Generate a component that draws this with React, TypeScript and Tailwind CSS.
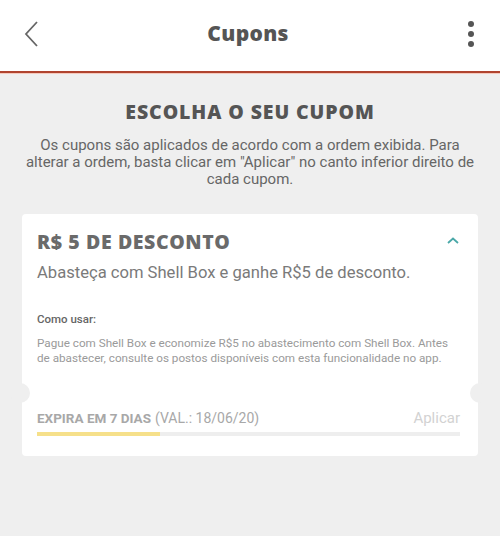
import React from "react";

const heading = { fontFamily: "'Open Sans', Lato, sans-serif" };

const CouponCard = () => {
  const progress = 29;

  return (
    <div className="relative mx-[22px] mt-[26px] rounded-[4px] bg-white px-[15px] pb-[20px] pt-[16px]">
      {/* ticket notches */}
      <div className="absolute left-[-12px] top-[169px] h-[20px] w-[20px] rounded-full bg-[#efefef]" />
      <div className="absolute right-[-12px] top-[169px] h-[20px] w-[20px] rounded-full bg-[#efefef]" />

      <div className="flex items-start justify-between">
        <h2
          className="text-[19.5px] font-extrabold leading-[24px] tracking-[0.6px] text-[#6a6a6a]"
          style={heading}
        >
          R$ 5 DE DESCONTO
        </h2>
        <svg width="14" height="10" viewBox="0 0 14 10" className="mr-[3px] mt-[6px]">
          <path d="M2 7 L7 2.5 L12 7" fill="none" stroke="#4aa8a8" strokeWidth="1.8" />
        </svg>
      </div>
      <p className="mt-[9px] text-[16.6px] leading-[20px] text-[#7a7a7a]">
        Abasteça com Shell Box e ganhe R$5 de desconto.
      </p>

      <p className="mt-[29px] text-[11.5px] font-medium leading-[14px] text-[#666]">
        Como usar:
      </p>
      <p className="mt-[10px] pr-[10px] text-[11.7px] leading-[15px] text-[#9a9a9a]">
        Pague com Shell Box e economize R$5 no abastecimento com Shell Box. Antes de abastecer,
        consulte os postos disponíveis com esta funcionalidade no app.
      </p>

      <div className="mt-[43px] flex items-end justify-between">
        <p className="leading-[18px]">
          <span className="text-[13.5px] font-bold text-[#a8a8a8]">EXPIRA EM 7 DIAS</span>{" "}
          <span className="text-[14px] text-[#a8a8a8]">(VAL.: 18/06/20)</span>
        </p>
        <span className="mr-[3px] text-[15px] leading-[18px] text-[#d2d2d2]">Aplicar</span>
      </div>
      <div className="mr-[3px] mt-[5px] h-[4px] bg-[#eeeeee]">
        <div className="h-full bg-[#f6e08a]" style={{ width: `${progress}%` }} />
      </div>
    </div>
  );
};

export default function App() {
  return (
    <div
      className="h-[536px] w-[500px] overflow-hidden bg-[#efefef]"
      style={{ fontFamily: "Roboto, 'Liberation Sans', sans-serif" }}
    >
      {/* Header */}
      <header className="flex h-[71px] items-center bg-white px-[22px] pb-[4px]">
        <div className="flex-1">
          <svg width="20" height="28" viewBox="0 0 20 28">
            <path d="M15 2 L4 14 L15 26" fill="none" stroke="#666" strokeWidth="1.8" />
          </svg>
        </div>
        <h1 className="text-[21px] font-extrabold tracking-[0.3px] text-[#555]" style={heading}>
          Cupons
        </h1>
        <div className="flex flex-1 justify-end pr-[4px]">
          <div className="flex flex-col items-center gap-[4px]">
            <span className="h-[6px] w-[6px] rounded-full bg-[#555]" />
            <span className="h-[6px] w-[6px] rounded-full bg-[#555]" />
            <span className="h-[6px] w-[6px] rounded-full bg-[#555]" />
          </div>
        </div>
      </header>
      <div className="h-[2px] bg-[#b0442f]" />
      <div className="h-[1px] bg-[#f5c9bd]" />

      <section className="px-[22px] pt-[25px] text-center">
        <h2
          className="text-[19.5px] font-extrabold leading-[26px] tracking-[0.9px] text-[#555]"
          style={heading}
        >
          ESCOLHA O SEU CUPOM
        </h2>
        <p className="mt-[12px] text-[15px] leading-[17px] text-[#666]">
          Os cupons são aplicados de acordo com a ordem exibida. Para alterar a ordem, basta
          clicar em "Aplicar" no canto inferior direito de cada cupom.
        </p>
      </section>

      <CouponCard />
    </div>
  );
}
